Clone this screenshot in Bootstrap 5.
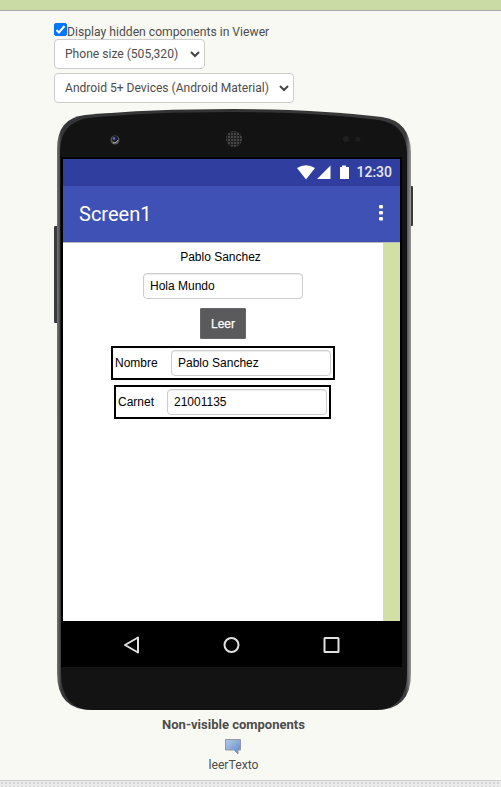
<!DOCTYPE html>
<html lang="es">
<head>
<meta charset="utf-8">
<meta name="viewport" content="width=device-width, initial-scale=1">
<title>Viewer</title>
<link href="https://cdn.jsdelivr.net/npm/bootstrap@5.3.0/dist/css/bootstrap.min.css" rel="stylesheet">
<style>
body{height:787px;background:#f8f9f3;color:#4d4d4d;font:13px/16px Roboto,sans-serif;overflow:hidden}
.topbar{height:11px;background:#cbdba6;border-bottom:1px solid #aaa}
.viewer{height:769px;padding:12px 0 0 54px}
.hidden-check{height:16px}
.hidden-check .form-check-input{width:13px;height:13px;margin:0;border-radius:2px;border-color:#0075ff}
.hidden-check .form-check-input:checked{background:#0075ff url("data:image/svg+xml,%3Csvg xmlns='http://www.w3.org/2000/svg' viewBox='0 0 11 11'%3E%3Cpath d='M1.500 6l2.500 2.500 5.500-6.500' fill='none' stroke='white' stroke-width='2'/%3E%3C/svg%3E") center/11px 11px no-repeat;border-color:#0075ff}
.hidden-check label{font-size:12.17px;line-height:19px;white-space:nowrap}
.pick{height:30px;padding:0 0 0 10px;border:1px solid #ccc;border-radius:4px;font-size:12.08px;line-height:28px;color:#4d4d4d;
background:#fff url("data:image/svg+xml,%3Csvg xmlns='http://www.w3.org/2000/svg' viewBox='0 0 10 7'%3E%3Cpath d='M1 1l4 4 4-4' fill='none' stroke='%23444' stroke-width='2'/%3E%3C/svg%3E") no-repeat right 4px center/10px 7px}
.pick-size{width:151px}
.pick-theme{width:240px;margin-top:4px}
.phone{width:360px;height:601px;margin-top:6px;padding:48px 0 0 7px}
.phone-body{left:0;top:0}
.device{width:341px;height:510px;background:#000;padding:2px 2px 0}
.statusbar{height:27px;background:#303f9f;padding:0 8px 2px 0;color:#e6e8f5;font-size:14px;font-weight:500}
.status-icons{margin-right:6px}
.titlebar{height:56px;background:#3f51b5;color:#fff;padding:0 17px 0 16px}
.titlebar h1{font-size:20px;font-weight:400}
.titlebar svg{margin-top:-2px}
.stage{height:379px;background:#d2e0a6;border-top:1px solid #bbb}
.app{width:320px;height:378px;background:#fff;font:12px/16px "Liberation Sans",Arial,sans-serif;color:#000}
.app .form-control{width:160px;height:26px;padding:0 6px;border:1px solid #ccc;border-radius:4px;font-size:12px;color:#000;box-shadow:inset 0 1px 1px rgba(0,0,0,.075)}
.app-label{margin:6px 5px 0 0}
.app>.form-control{margin-top:8px}
.read-btn{width:46px;height:31px;margin-top:9px;padding:0;border:1px solid #666;border-radius:1px;background:#5a5a5c;color:#fff;font-size:12px;-webkit-text-stroke:.25px #fff}
.field{height:34px;border:2px solid #000;padding:0 2px}
.field-name{width:224px;margin-top:7px}
.field-card{width:217px;margin:5px 1px 0 0}
.navkeys{height:46px}
.hidden-list{width:359px;margin-top:7px}
.bubble{margin-top:6px;margin-bottom:2px}
.component-name{font-size:12.2px}
.footer-strip{height:7px;border-top:1px solid #ccc;background:radial-gradient(circle,#d4d4d4 .8px,transparent 1.2px) 0 0/4px 4px #ebebeb}
</style>
</head>
<body>
<header class="topbar"></header>
<main class="viewer">
  <div class="hidden-check d-flex align-items-start">
    <input class="form-check-input" type="checkbox" id="hid" checked>
    <label for="hid">Display hidden components in Viewer</label>
  </div>
  <select class="form-select pick pick-size d-block"><option>Phone size (505,320)</option></select>
  <select class="form-select pick pick-theme d-block"><option>Android 5+ Devices (Android Material)</option></select>

  <section class="phone position-relative">
    <svg class="phone-body position-absolute" width="360" height="601" viewBox="0 0 360 601">
      <defs>
        <linearGradient id="edge" x1="0" x2="1"><stop offset="0" stop-color="#777"/><stop offset=".012" stop-color="#343537"/><stop offset=".5" stop-color="#333"/><stop offset=".985" stop-color="#3c3b3c"/><stop offset="1" stop-color="#999"/></linearGradient>
        <pattern id="mesh" width="3" height="3" patternUnits="userSpaceOnUse"><rect width="3" height="3" fill="#222"/><circle cx="1" cy="1" r=".9" fill="#555"/></pattern>
      </defs>
      <rect x="0" y="117" width="5" height="97" rx="1" fill="#3a3b3c"/>
      <rect x="354" y="77" width="5" height="40" rx="1" fill="#3a3a3b"/>
      <path d="M3 40Q3 9 31 6Q95 0 179 0Q264 0 328 8Q356 12 357 43V565Q357 601 322 601H38Q3 601 3 564Z" fill="url(#edge)"/>
      <path d="M6 42Q6 14 34 9Q95 3 179 3Q264 3 325 11Q352 15 353 44V564Q353 601 320 601H40Q7 601 7 564Z" fill="#131313"/>
      <circle cx="61" cy="31" r="4.500" fill="#555"/><circle cx="61" cy="30" r="3" fill="#17172f"/><circle cx="60" cy="29.500" r="1.300" fill="#7777b5"/><path d="M59 34q4 0 5-3" stroke="#aaa" fill="none"/>
      <circle cx="180" cy="30" r="8" fill="url(#mesh)"/>
      <circle cx="292" cy="30" r="3" fill="#202020"/><circle cx="304" cy="30" r="2.500" fill="#1e1e1e"/>
    </svg>
    <div class="device position-relative">
      <div class="statusbar d-flex align-items-center justify-content-end">
        <svg class="status-icons" width="53" height="16" viewBox="0 0 53 16" fill="#fff"><path d="M0 4Q9-1.500 18 4L9 15.500ZM33.500 1.500V15H20ZM43 3h2V1.500h4V3h3v12h-9Z"/></svg>
        <span>12:30</span>
      </div>
      <div class="titlebar d-flex align-items-center justify-content-between">
        <h1 class="m-0">Screen1</h1>
        <svg width="4" height="16" viewBox="0 0 4 16" fill="#fff"><rect y="0" width="4" height="3.500" rx="1"/><rect y="6" width="4" height="3.500" rx="1"/><rect y="12" width="4" height="3.500" rx="1"/></svg>
      </div>
      <div class="stage">
        <div class="app d-flex flex-column align-items-center">
          <div class="app-label">Pablo Sanchez</div>
          <input class="form-control" value="Hola Mundo">
          <button class="btn read-btn">Leer</button>
          <div class="field field-name d-flex align-items-center justify-content-between"><span>Nombre</span><input class="form-control" value="Pablo Sanchez"></div>
          <div class="field field-card d-flex align-items-center justify-content-between"><span>Carnet</span><input class="form-control" value="21001135"></div>
        </div>
      </div>
      <div class="navkeys d-flex align-items-center">
        <svg width="337" height="46" viewBox="0 0 337 46" fill="none" stroke="#e0e0e0" stroke-width="2" stroke-linejoin="round"><path d="M75 16.500V31.500L62 24Z"/><circle cx="168.500" cy="24" r="7"/><rect x="261.500" y="17" width="14" height="14" rx=".5"/></svg>
      </div>
    </div>
  </section>

  <section class="hidden-list text-center">
    <div class="fw-bold">Non-visible components</div>
    <svg class="d-block mx-auto bubble" width="17" height="16" viewBox="0 0 17 16"><defs><linearGradient id="bub" x2="1" y2="1"><stop stop-color="#b5cdec"/><stop offset="1" stop-color="#5b87c8"/></linearGradient></defs><path d="M.5.500h15v10.500h-2.500v4l-4-4H.5Z" fill="url(#bub)" stroke="#9298a2"/></svg>
    <div class="component-name">leerTexto</div>
  </section>
</main>
<footer class="footer-strip"></footer>
<script src="https://cdn.jsdelivr.net/npm/bootstrap@5.3.0/dist/js/bootstrap.bundle.min.js"></script>
</body>
</html>
